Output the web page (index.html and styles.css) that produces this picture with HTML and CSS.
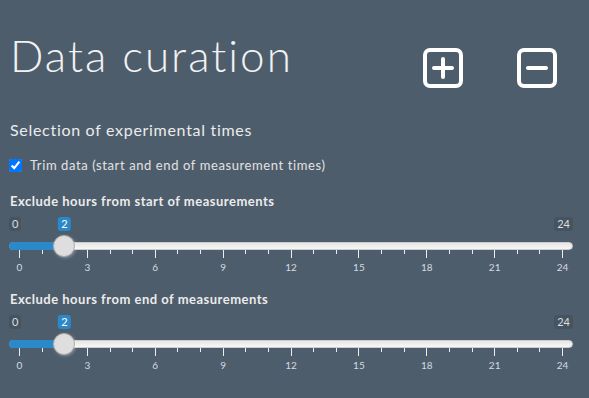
FILE: index.html
```html
<!DOCTYPE html>
<html lang="en">

<head>
    <meta charset="UTF-8">
    <meta name="viewport" content="width=device-width, initial-scale=1.0">
    <title>Data curation</title>
    <link rel="stylesheet" href="styles.css">
</head>

<body>
    <div id="page">
        <div class="top">
            <h1 class="title">Data curation</h1>
            <div class="tools">
                <button class="icon-btn" title="Add">
                    <svg width="40" height="40" viewBox="0 0 40 40">
                        <rect x="2" y="2" width="36" height="36" rx="5" fill="none" stroke="#fff" stroke-width="4"/>
                        <path d="M20 11v18M11 20h18" stroke="#fff" stroke-width="4" stroke-linecap="round"/>
                    </svg>
                </button>
                <button class="icon-btn" title="Remove">
                    <svg width="40" height="40" viewBox="0 0 40 40">
                        <rect x="2" y="2" width="36" height="36" rx="5" fill="none" stroke="#fff" stroke-width="4"/>
                        <path d="M11 20h18" stroke="#fff" stroke-width="4" stroke-linecap="round"/>
                    </svg>
                </button>
            </div>
        </div>

        <h4 class="section">Selection of experimental times</h4>

        <div class="check">
            <input type="checkbox" id="trim" checked>
            <label for="trim">Trim data (start and end of measurement times)</label>
        </div>

        <div class="field">
            <label class="field-label" for="startHours">Exclude hours from start of measurements</label>
            <div class="irs" id="startHours" style="--pos: 8.333%">
                <div class="irs-labels">
                    <span class="irs-minmax">0</span>
                    <span class="irs-minmax">24</span>
                    <span class="irs-single">2</span>
                </div>
                <div class="irs-line">
                    <div class="irs-bar"></div>
                    <div class="irs-rail"><span class="irs-handle"></span></div>
                </div>
                <div class="irs-grid"></div>
                <div class="irs-nums"></div>
            </div>
        </div>

        <div class="field">
            <label class="field-label" for="endHours">Exclude hours from end of measurements</label>
            <div class="irs" id="endHours" style="--pos: 8.333%">
                <div class="irs-labels">
                    <span class="irs-minmax">0</span>
                    <span class="irs-minmax">24</span>
                    <span class="irs-single">2</span>
                </div>
                <div class="irs-line">
                    <div class="irs-bar"></div>
                    <div class="irs-rail"><span class="irs-handle"></span></div>
                </div>
                <div class="irs-grid"></div>
                <div class="irs-nums"></div>
            </div>
        </div>
    </div>
    <script>
        // build ticks and numbers of each slider grid (0..24, major every 3)
        Array.from(document.querySelectorAll('.irs')).map($irs => {
            let $grid = $irs.querySelector('.irs-grid'),
                $nums = $irs.querySelector('.irs-nums');
            for (let i = 0; i <= 24; i++) {
                let tick = document.createElement('span');
                tick.className = i % 3 === 0 ? 'pol' : 'pol small';
                $grid.appendChild(tick);
                if (i % 3 === 0) {
                    let num = document.createElement('span');
                    num.className = 'num';
                    num.innerHTML = '<i>' + i + '</i>';
                    $nums.appendChild(num);
                }
            }
        });
    </script>
</body>

</html>
```

FILE: styles.css
```css
* {
    box-sizing: border-box;
}

body {
    margin: 0;
    background-color: #4e5d6c;
    color: #ebebeb;
    font-family: Lato, "Noto Sans", sans-serif;
}

#page {
    padding: 0 16px 0 9px;
}

.top {
    display: flex;
    align-items: flex-start;
}

.title {
    margin: 30px 0 0 1px;
    font-size: 44px;
    line-height: 50px;
    font-weight: 300;
    letter-spacing: 2px;
    color: #f2f2f2;
}

.tools {
    display: flex;
    gap: 54px;
    margin: 48px 16px 0 auto;
}

.icon-btn {
    width: 40px;
    height: 40px;
    padding: 0;
    border: none;
    background: none;
    cursor: pointer;
}

.icon-btn svg {
    display: block;
}

.section {
    margin: 32px 0 0 1px;
    font-size: 16px;
    line-height: 20px;
    font-weight: 400;
    letter-spacing: 0.7px;
}

.check {
    display: flex;
    align-items: center;
    gap: 8px;
    margin: 17px 0 20px;
    font-size: 13px;
    line-height: 16px;
    letter-spacing: 0.6px;
    color: #e2e2e2;
}

.check input {
    width: 13px;
    height: 13px;
    margin: 0;
}

.field-label {
    display: block;
    margin-left: 1px;
    font-size: 13px;
    line-height: 16px;
    font-weight: 700;
    letter-spacing: 0.5px;
}

.irs {
    position: relative;
    width: 564px;
    margin-top: 8px;
    margin-bottom: 18px;
}

.irs-labels {
    display: flex;
    justify-content: space-between;
    height: 14px;
}

.irs-minmax,
.irs-single {
    padding: 1px 3px;
    border-radius: 3px;
    font-size: 11px;
    line-height: 12px;
}

.irs-minmax {
    background: rgba(0, 0, 0, 0.1);
    color: #dedede;
}

.irs-single {
    position: absolute;
    top: 0;
    left: calc(10px + var(--pos) * 544 / 564);
    transform: translateX(-50%);
    background: #2b89c9;
    color: #fff;
}

.irs-line {
    position: relative;
    height: 8px;
    margin-top: 11px;
    border: 1px solid #cccccc;
    border-radius: 8px;
    background: linear-gradient(to bottom, #dedede -50%, #fff 150%);
}

.irs-bar {
    position: absolute;
    top: -1px;
    left: -1px;
    height: 8px;
    width: calc(11px + var(--pos) * 544 / 564);
    border-radius: 8px 0 0 8px;
    background: #2b89c9;
}

.irs-rail {
    position: relative;
    height: 100%;
    margin: 0 9px;
}

.irs-handle {
    position: absolute;
    top: -8px;
    left: var(--pos);
    width: 22px;
    height: 22px;
    transform: translateX(-50%);
    border: 1px solid #ababab;
    border-radius: 50%;
    background: #dedede;
    box-shadow: 1px 1px 3px rgba(255, 255, 255, 0.3);
}

.irs-grid {
    display: flex;
    justify-content: space-between;
    align-items: flex-start;
    margin: 0 10px;
    height: 8px;
}

.pol {
    width: 1px;
    height: 8px;
    background: #ededed;
}

.pol.small {
    height: 4px;
}

.irs-nums {
    display: flex;
    justify-content: space-between;
    margin: 3px 10px 0;
    font-size: 10px;
    line-height: 12px;
    color: #d4dbe2;
}

.num {
    display: flex;
    justify-content: center;
    width: 1px;
}

.num i {
    font-style: normal;
}
```
